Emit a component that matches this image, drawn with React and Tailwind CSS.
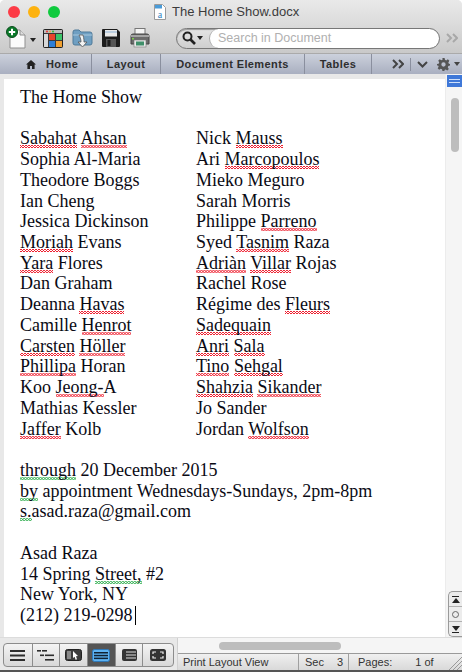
import React from "react";

const leftNames = [
  "{Sabahat} {Ahsan}", "Sophia Al-Maria", "Theodore Boggs", "Ian Cheng", "Jessica Dickinson",
  "{Moriah} Evans", "{Yara} Flores", "Dan Graham", "Deanna {Havas}", "Camille {Henrot}",
  "{Carsten} {Höller}", "{Phillipa} Horan", "Koo {Jeong-}A", "Mathias Kessler", "{Jaffer} Kolb",
];
const rightNames = [
  "Nick {Mauss}", "Ari {Marcopoulos}", "Mieko Meguro", "Sarah Morris", "Philippe {Parreno}",
  "Syed {Tasnim} Raza", "{Adriàn} {Villar} Rojas", "Rachel Rose", "Régime des {Fleurs}", "{Sadequain}",
  "{Anri} {Sala}", "{Tino} {Sehgal}", "{Shahzia} {Sikander}", "Jo Sander", "Jordan {Wolfson}",
];

// {word} gets the red spelling squiggle, [word] the green grammar one
const Line = ({ text, children }) => (
  <div className="h-[20.73px] whitespace-nowrap">
    {text.split(/(\{[^}]+\}|\[[^\]]+\])/).map((part, i) => {
      if (part.startsWith("{")) {
        return <span key={i} className="bg-[linear-gradient(45deg,transparent_35%,#ee2030_35%,#ee2030_65%,transparent_65%),linear-gradient(-45deg,transparent_35%,#ee2030_35%,#ee2030_65%,transparent_65%)] bg-[length:3px_3px] bg-repeat-x bg-bottom">{part.slice(1, -1)}</span>;
      }
      if (part.startsWith("[")) {
        return <span key={i} className="bg-[linear-gradient(45deg,transparent_35%,#2fae4e_35%,#2fae4e_65%,transparent_65%),linear-gradient(-45deg,transparent_35%,#2fae4e_35%,#2fae4e_65%,transparent_65%)] bg-[length:3px_3px] bg-repeat-x bg-bottom">{part.slice(1, -1)}</span>;
      }
      return <span key={i}>{part}</span>;
    })}
    {children}
  </div>
);

const Blank = () => <div className="h-[20.73px]" />;

const NewDocIcon = () => (
  <svg width="20" height="24" viewBox="0 0 20 24">
    <path d="M4 4h10l5 5v13H4z" fill="#fbfbfb" stroke="#8f8f8f" />
    <path d="M14 4v5h5" fill="#ddd" stroke="#8f8f8f" />
    <circle cx="6" cy="6" r="5.5" fill="#0a7a2a" stroke="#0c4d1c" />
    <path d="M6 2.8v6.4M2.8 6h6.4" stroke="#fff" strokeWidth="2" />
  </svg>
);

const GalleryIcon = () => (
  <svg width="20" height="19" viewBox="0 0 20 19">
    <rect x="0.5" y="0.5" width="19" height="18" rx="1" fill="#3a3a3a" stroke="#222" />
    <rect x="1" y="1" width="18" height="3" fill="#bcbcbc" />
    <circle cx="4" cy="2.5" r="1" fill="#e33" />
    <circle cx="7" cy="2.5" r="1" fill="#ea3" />
    <circle cx="10" cy="2.5" r="1" fill="#3b3" />
    <rect x="1" y="5" width="4" height="13" fill="#d8d8d8" />
    <rect x="6" y="5" width="6" height="6" fill="#e8452c" />
    <rect x="13" y="5" width="6" height="6" fill="#3cc46a" />
    <rect x="6" y="12" width="6" height="6" fill="#2f7fd6" />
    <rect x="13" y="12" width="6" height="6" fill="#f0a030" />
  </svg>
);

const OpenIcon = () => (
  <svg width="21" height="20" viewBox="0 0 21 20">
    <path d="M1 4q0-2 2-2h4l2 2h9q2 0 2 2v9q0 2-2 2H3q-2 0-2-2z" fill="#6f9fc2" stroke="#4f7a9a" />
    <path d="M1 7h19" stroke="#a9c8de" />
    <path d="M11 7c1 4 1 5 1 7h3l-4.5 5L6 14h3c0-3-1-5-2-7z" fill="#f4f4f4" stroke="#555" strokeWidth="0.8" />
  </svg>
);

const SaveIcon = () => (
  <svg width="18" height="18" viewBox="0 0 18 18">
    <path d="M1 0h14l3 3v14a1 1 0 0 1-1 1H1a1 1 0 0 1-1-1V1a1 1 0 0 1 1-1z" fill="#1c1c1c" />
    <rect x="3" y="1" width="12" height="6.5" fill="#e9e9e9" />
    <rect x="3" y="2.5" width="12" height="1" fill="#8fb4d8" />
    <rect x="4" y="10" width="10" height="8" fill="#555" />
    <rect x="5.5" y="11" width="3" height="6" fill="#1c1c1c" />
  </svg>
);

const PrintIcon = () => (
  <svg width="20" height="20" viewBox="0 0 20 20">
    <rect x="5" y="0.5" width="10" height="7" fill="#f4f4f4" stroke="#777" />
    <path d="M1 8q0-2 2-2h14q2 0 2 2v8H1z" fill="#6b6b6b" stroke="#444" />
    <rect x="1" y="7" width="18" height="2" fill="#a4a4a4" />
    <rect x="4" y="12" width="12" height="7" fill="#e8e8e8" stroke="#777" strokeWidth="0.6" />
    <rect x="6" y="13.5" width="8" height="4" fill="#3f8f6a" />
    <rect x="2" y="10" width="2" height="1.5" fill="#7ad04a" />
  </svg>
);

const HouseIcon = () => (
  <svg width="10" height="9" viewBox="0 0 10 9">
    <path d="M5 0l5 4.6H8.6V9H6V6H4v3H1.4V4.6H0z" fill="#222" />
  </svg>
);

const GearIcon = () => (
  <svg width="13" height="13" viewBox="0 0 24 24">
    <path
      d="M10 0h4l.7 3.4 2.4 1 2.9-1.9 2.8 2.8-1.9 2.9 1 2.4L24 11v3l-3.1.9-1 2.4 1.9 2.9-2.8 2.8-2.9-1.9-2.4 1L14 24h-4l-.7-3.1-2.4-1-2.9 1.9-2.8-2.8 1.9-2.9-1-2.4L0 14v-3l3.1-.6 1-2.4-1.9-2.9L5 2.3l2.9 1.9 2.4-1zM12 8a4 4 0 1 0 0 8 4 4 0 0 0 0-8z"
      fill="#555"
      fillRule="evenodd"
    />
  </svg>
);

const Chevrons = ({ color }) => (
  <svg width="12" height="10" viewBox="0 0 12 10" fill="none" stroke={color} strokeWidth="2">
    <path d="M1 1l4 4-4 4M7 1l4 4-4 4" />
  </svg>
);

const DocFileIcon = () => (
  <svg width="12" height="16" viewBox="0 0 12 16">
    <path d="M.5.5h8l3 3v12H.5z" fill="#fff" stroke="#9a9a9a" />
    <rect x="1" y="1" width="7" height="3.5" fill="#4a9bd8" />
    <text x="6" y="13.5" fontSize="10" textAnchor="middle" fill="#2f7fc0" fontFamily="Liberation Serif, serif">a</text>
  </svg>
);

const viewIcons = [
  <svg key="0" width="15" height="11" viewBox="0 0 15 11" fill="#2d2d2d"><rect width="15" height="2" /><rect y="4.5" width="15" height="2" /><rect y="9" width="15" height="2" /></svg>,
  <svg key="1" width="17" height="11" viewBox="0 0 17 11" fill="#2d2d2d"><rect width="4" height="1.6" /><rect x="5" width="5" height="1.6" /><rect x="3" y="4.5" width="4" height="1.6" /><rect x="8" y="4.5" width="9" height="1.6" /><rect x="8" y="9" width="9" height="1.6" /></svg>,
  <svg key="2" width="17" height="12" viewBox="0 0 17 12"><rect x="0.5" y="0.5" width="16" height="11" rx="2" fill="#3c3c3c" stroke="#222" /><rect x="2" y="2" width="4" height="8" fill="#888" /><path d="M8 2l5 5-2 .3 1 3-1.4.4-1-3L8 9z" fill="#fff" /></svg>,
  <svg key="3" width="18" height="13" viewBox="0 0 18 13"><rect x="0.5" y="0.5" width="17" height="12" rx="2" fill="#5db2f2" stroke="#2f78b8" /><rect x="2" y="3" width="14" height="1.5" fill="#123" /><rect x="2" y="5.8" width="14" height="1.5" fill="#123" /><rect x="2" y="8.6" width="14" height="1.5" fill="#123" /></svg>,
  <svg key="4" width="15" height="12" viewBox="0 0 15 12"><rect width="15" height="12" rx="2" fill="#333" /><rect x="4" y="2.5" width="10" height="1" fill="#ddd" /><rect x="4" y="5.5" width="10" height="1" fill="#ddd" /><rect x="4" y="8.5" width="10" height="1" fill="#ddd" /></svg>,
  <svg key="5" width="16" height="12" viewBox="0 0 16 12"><rect width="16" height="12" rx="2.5" fill="#333" /><path d="M3 5V3h3M10 3h3v2M13 7v2h-3M6 9H3V7" fill="none" stroke="#eee" strokeWidth="1.2" /></svg>,
];
const viewWidths = ["w-[29px]", "w-[28px]", "w-[28px]", "w-[28px]", "w-[28px]", "w-[30px]"];

export default function App() {
  return (
    <div
      className="w-[462px] h-[672px] overflow-hidden flex flex-col bg-[#e8e8e8] text-black rounded-t-[5px]"
      style={{ fontFamily: '"Liberation Sans", Arial, sans-serif' }}
    >
      {/* title bar */}
      <div className="h-[23px] flex items-center bg-gradient-to-b from-[#e9e9e9] to-[#dcdcdc] relative">
        <div className="flex gap-2 pl-2">
          <span className="w-3 h-3 rounded-full bg-[#fc3b46]" />
          <span className="w-3 h-3 rounded-full bg-[#fdb20f]" />
          <span className="w-3 h-3 rounded-full bg-[#0fca3e]" />
        </div>
        <div className="ml-[94px] flex items-center gap-[6px] text-[13px] text-[#3c3c3c]">
          <DocFileIcon />
          <span>The Home Show.docx</span>
        </div>
      </div>

      {/* toolbar */}
      <div className="h-[30px] flex items-center bg-gradient-to-b from-[#dcdcdc] to-[#c9c9c9] pl-[6px]">
        <NewDocIcon />
        <span className="ml-[4px] mt-1 w-0 h-0 border-x-[3px] border-x-transparent border-t-[4px] border-t-[#222]" />
        <span className="ml-[7px]"><GalleryIcon /></span>
        <span className="ml-[9px]"><OpenIcon /></span>
        <span className="ml-[9px]"><SaveIcon /></span>
        <span className="ml-[10px]"><PrintIcon /></span>
        <div className="ml-[26px] w-[264px] h-[21px] flex items-center rounded-full border border-[#777] bg-gradient-to-b from-[#e4e4e4] to-[#cfcfcf] overflow-hidden shadow-[inset_0_1px_1px_#999]">
          <div className="w-[32px] flex items-center pl-[5px] gap-px">
            <svg width="14" height="14" viewBox="0 0 14 14" fill="none" stroke="#222" strokeWidth="2">
              <circle cx="5.5" cy="5.5" r="4" />
              <path d="M8.5 8.5l4.5 4.5" strokeWidth="2.6" />
            </svg>
            <span className="w-0 h-0 border-x-[3px] border-x-transparent border-t-[4px] border-t-[#222]" />
          </div>
          <div className="flex-1 h-full bg-white rounded-l-full rounded-r-full pl-2 flex items-center text-[12.5px] text-[#b0b0b0] border-l border-[#aaa]">
            Search in Document
          </div>
        </div>
        <span className="ml-[6px]"><Chevrons color="#a8a8a8" /></span>
      </div>

      {/* ribbon tabs */}
      <div className="h-[21px] flex items-center border-t border-[#aaa] bg-gradient-to-b from-[#ccd1dc] to-[#a9afc0] text-[11px] font-bold text-[#2e2e2e] tracking-[0.4px]">
        <div className="w-[92px] h-full flex items-center pl-[26px] gap-[10px] border-r border-[#8a8f9e]">
          <HouseIcon />
          <span>Home</span>
        </div>
        <div className="w-[69px] h-full flex items-center justify-center border-r border-[#8a8f9e]">Layout</div>
        <div className="w-[144px] h-full flex items-center justify-center border-r border-[#8a8f9e]">Document Elements</div>
        <div className="w-[67px] h-full flex items-center justify-center border-r border-[#8a8f9e]">Tables</div>
        <span className="ml-[20px]"><Chevrons color="#444" /></span>
        <span className="ml-[6px] w-px h-[13px] bg-[#8a8f9e]" />
        <svg className="ml-[6px]" width="11" height="7" viewBox="0 0 11 7" fill="none" stroke="#444" strokeWidth="2"><path d="M1 1l4.5 4.5L10 1" /></svg>
        <span className="ml-[9px]"><GearIcon /></span>
        <span className="ml-[4px] w-0 h-0 border-x-[3px] border-x-transparent border-t-[4px] border-t-[#444]" />
      </div>

      {/* document + vertical scrollbar */}
      <div className="flex-1 min-h-0 flex">
        <div
          className="flex-1 mt-[5px] ml-1 bg-white pl-4 pt-2 overflow-hidden text-[18px] leading-[20.73px] text-[#0a0a14]"
          style={{ fontFamily: '"Liberation Serif", "Times New Roman", serif' }}
        >
          <Line text="The Home Show" />
          <Blank />
          <div className="grid grid-cols-[176px_1fr]">
            <div>{leftNames.map((n) => <Line key={n} text={n} />)}</div>
            <div>{rightNames.map((n) => <Line key={n} text={n} />)}</div>
          </div>
          <Blank />
          <Line text="[through] 20 December 2015" />
          <Line text="[by] appointment Wednesdays-Sundays, 2pm-8pm" />
          <Line text="[s.]asad.raza@gmail.com" />
          <Blank />
          <Line text="Asad Raza" />
          <Line text="14 Spring [Street,] #2" />
          <Line text="New York, NY" />
          <Line text="(212) 219-0298">
            <span className="inline-block w-px h-[19px] bg-black ml-[3px] align-[-4px]" />
          </Line>
        </div>
        <div className="w-[17px] bg-[#f5f5f5] flex flex-col items-end border-l border-[#ececec]">
          <div className="w-[15px] h-[12px] mt-px flex flex-col justify-center gap-[2px] bg-[#3f78d8] px-[2px]">
            <span className="h-px bg-[#cfe0fa]" />
            <span className="h-px bg-[#cfe0fa]" />
          </div>
          <div className="w-[8px] h-[54px] mt-[11px] mr-[3px] rounded-full bg-[#bdbdbd]" />
          <div className="mt-auto w-[14px] h-[46px] flex flex-col rounded-l-[5px] border border-r-0 border-[#9a9a9a] bg-[#ececec] divide-y divide-[#b0b0b0]">
            <div className="flex-1 flex flex-col items-center justify-center gap-px">
              <span className="w-[7px] h-px bg-[#222]" />
              <span className="w-0 h-0 border-x-[4px] border-x-transparent border-b-[5px] border-b-[#222]" />
            </div>
            <div className="flex-1 flex items-center justify-center">
              <span className="w-[7px] h-[7px] rounded-full border border-[#666]" />
            </div>
            <div className="flex-1 flex flex-col items-center justify-center gap-px">
              <span className="w-0 h-0 border-x-[4px] border-x-transparent border-t-[5px] border-t-[#222]" />
              <span className="w-[7px] h-px bg-[#222]" />
            </div>
          </div>
        </div>
      </div>

      {/* view buttons + status bar */}
      <div className="h-[35px] flex border-t border-[#dcdcdc] border-b-2 border-b-[#555]">
        <div className="w-[178px] pl-[3px] pt-[5px] bg-[#e8e8e8] border-r border-[#d0d0d0]">
          <div className="w-[171px] h-[24px] flex rounded-[4px] border border-[#8c8c8c] bg-gradient-to-b from-[#f4f4f4] to-[#d8d8d8] overflow-hidden">
            {viewIcons.map((icon, i) => (
              <div
                key={i}
                className={`${viewWidths[i]} flex items-center justify-center border-r border-[#8c8c8c] last:border-r-0 ${i === 3 ? "bg-[#555]" : ""}`}
              >
                {icon}
              </div>
            ))}
          </div>
        </div>
        <div className="flex-1 flex flex-col">
          <div className="h-[15px] bg-[#f5f5f5] pl-[41px] pt-[4px]">
            <div className="w-[122px] h-[8px] rounded-full bg-[#bdbdbd]" />
          </div>
          <div className="flex-1 flex items-center bg-gradient-to-b from-[#f0f0f0] to-[#d9d9d9] border-t border-[#9a9a9a] text-[11px] text-[#333]">
            <div className="w-[121px] h-full flex items-center pl-[5px] border-r border-[#a0a0a0]">Print Layout View</div>
            <div className="w-[50px] h-full flex items-center justify-between pl-[6px] pr-[5px] border-r border-[#a0a0a0]">
              <span>Sec</span>
              <span>3</span>
            </div>
            <div className="flex-1 h-full flex items-center pl-[9px] relative">
              <span>Pages:</span>
              <span className="ml-[23px]">1 of</span>
              <svg className="absolute right-0 bottom-0" width="14" height="14" viewBox="0 0 14 14" stroke="#999" fill="none">
                <path d="M14 1L1 14M14 5L5 14M14 9L9 14" />
              </svg>
            </div>
          </div>
        </div>
      </div>
    </div>
  );
}
